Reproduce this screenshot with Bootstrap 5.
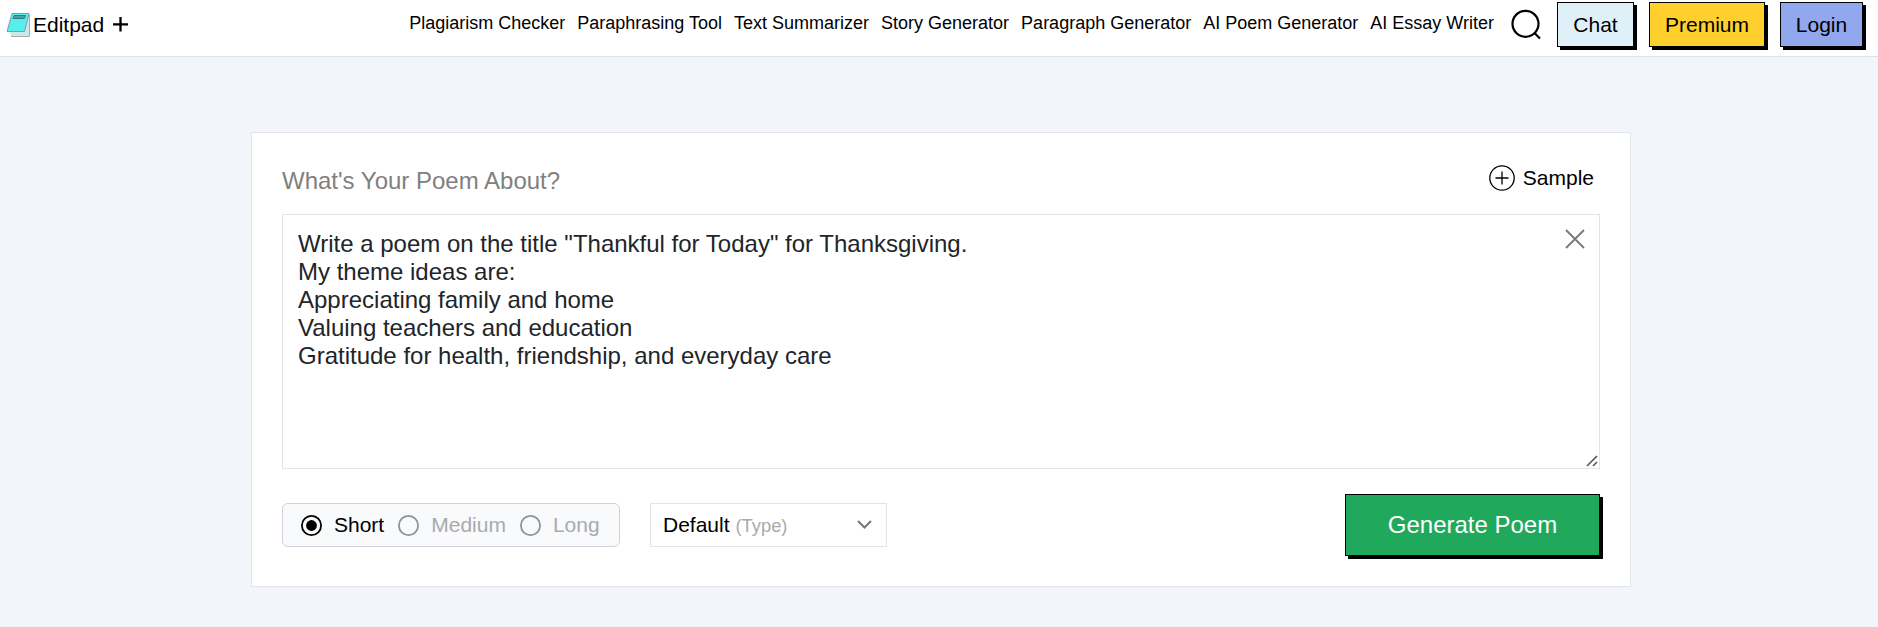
<!DOCTYPE html>
<html lang="en">
<head>
<meta charset="utf-8">
<meta name="viewport" content="width=device-width, initial-scale=1">
<title>Editpad - AI Poem Generator</title>
<link href="https://cdn.jsdelivr.net/npm/bootstrap@5.3.0/dist/css/bootstrap.min.css" rel="stylesheet">
<style>
body{font-family:"Liberation Sans",Arial,sans-serif;background:#f2f5fa;color:#000;overflow:hidden}
.topbar{height:57px;border-bottom:1px solid #dee2e6;padding:0 15px 0 6px}
.brand{font-size:21px;line-height:24px;color:#000;margin-top:13px}
.brand-name{margin-left:3px}
.plus{margin-left:9px}
.links{margin-top:12px;gap:12px;font-size:18px;line-height:22px}
.links a{color:#000;text-decoration:none;white-space:nowrap}
.search{margin:9px 0 0 17px}
.btn-block3d{border:1px solid #000;border-radius:0;box-shadow:3px 3px 0 #000;font-size:21px;line-height:24px;padding:0;color:#000;height:45px;margin-top:2px}
.b-chat{background:#e0f0f9;width:77px;margin-left:16px}
.b-prem{background:#ffcf2d;width:116px;margin-left:15px}
.b-login{background:#91a7ee;width:83px;margin-left:15px}
.tool{width:1380px;height:455px;margin:75px 0 0 251px;border:1px solid #e1e4e8;border-radius:0;padding:30px}
.tool-head{height:51px}
.ask{font-size:24px;line-height:28px;color:#808080;margin-top:4px}
.sample{font-size:21px;line-height:24px;gap:8px;margin:2px 6px 0 0}
.editor{height:255px;border:1px solid #e1e4e8;border-radius:0;padding:15px;font-size:24px;line-height:28px;color:#212529;resize:none}
.clear{top:15px;right:15px}
.grip{right:2px;bottom:2px}
.controls{margin-top:25px}
.lengths{width:338px;height:44px;background:#f9fafc;border:1px solid #ced1da;border-radius:6px;padding-left:18px;font-size:21px;color:#aaa;gap:14px}
.lengths label{gap:12px}
.kind{width:237px;height:44px;border:1px solid #e1e4e8;padding:0 14px 0 12px;margin-left:30px;font-size:21px}
.kind small{font-size:18.4px;color:#aaa}
.b-gen{width:255px;height:62px;margin:0;background:#20a95c;color:#fff;font-size:24px}
</style>
</head>
<body>
<header class="topbar bg-white d-flex align-items-start">
  <a class="brand d-flex text-decoration-none" href="#">
    <svg width="24" height="25" viewBox="0 0 24 25"><path d="M4 18 23 1V24H5z" fill="#c7e9ec"/><path d="M5 23.500H23.500V2" fill="none" stroke="#aaa"/><path d="M6 .5H23L18.500 18.500H1z" fill="#57efee" stroke="#879a9d"/><path d="M8 2.500H19.500L18.500 5.500H7z" fill="#44a3a7" stroke="#38797e"/></svg>
    <span class="brand-name">Editpad</span>
    <svg class="plus" width="15" height="24" viewBox="0 0 15 24"><path d="M0 11.300H15M7.500 4V18.500" stroke="#000" stroke-width="2.300"/></svg>
  </a>
  <nav class="links d-flex ms-auto">
    <a href="#">Plagiarism Checker</a><a href="#">Paraphrasing Tool</a><a href="#">Text Summarizer</a><a href="#">Story Generator</a><a href="#">Paragraph Generator</a><a href="#">AI Poem Generator</a><a href="#">AI Essay Writer</a>
  </nav>
  <svg class="search" width="30" height="31" viewBox="0 0 30 31" fill="none" stroke="#000" stroke-width="2.200"><circle cx="14.500" cy="14.800" r="13"/><path d="M23.500 24 29 29.500"/></svg>
  <button class="btn btn-block3d b-chat">Chat</button>
  <button class="btn btn-block3d b-prem">Premium</button>
  <button class="btn btn-block3d b-login">Login</button>
</header>
<main>
  <section class="card tool">
    <div class="tool-head d-flex justify-content-between align-items-start">
      <label class="ask" for="topic">What's Your Poem About?</label>
      <div class="sample d-flex align-items-center">
        <svg width="26" height="26" viewBox="0 0 26 26" fill="none" stroke="#000" stroke-width="1.300"><circle cx="13" cy="13" r="12.200"/><path d="M6.500 13H19.500M13 6.500V19.500"/></svg>
        <span>Sample</span>
      </div>
    </div>
    <div class="position-relative">
      <textarea id="topic" class="form-control editor" spellcheck="false">Write a poem on the title "Thankful for Today" for Thanksgiving.
My theme ideas are:
Appreciating family and home
Valuing teachers and education
Gratitude for health, friendship, and everyday care</textarea>
      <svg class="clear position-absolute" width="20" height="20" viewBox="0 0 20 20"><path d="M1 1 19 19M19 1 1 19" stroke="#777" stroke-width="1.800"/></svg>
      <svg class="grip position-absolute" width="12" height="12" viewBox="0 0 12 12"><path d="M1 11 11 1M7 11 11 7" stroke="#555" stroke-width="1.600"/></svg>
    </div>
    <div class="controls d-flex align-items-center">
      <div class="lengths d-flex align-items-center">
        <label class="d-flex align-items-center text-black"><svg width="21" height="21" viewBox="0 0 21 21"><circle cx="10.500" cy="10.500" r="9.600" fill="none" stroke="#000" stroke-width="1.800"/><circle cx="10.500" cy="10.500" r="5.400"/></svg>Short</label>
        <label class="d-flex align-items-center"><svg width="21" height="21" viewBox="0 0 21 21"><circle cx="10.500" cy="10.500" r="9.600" fill="none" stroke="#919191" stroke-width="1.800"/></svg>Medium</label>
        <label class="d-flex align-items-center"><svg width="21" height="21" viewBox="0 0 21 21"><circle cx="10.500" cy="10.500" r="9.600" fill="none" stroke="#919191" stroke-width="1.800"/></svg>Long</label>
      </div>
      <div class="kind d-flex align-items-center"><span>Default <small>(Type)</small></span>
        <svg class="ms-auto" width="15" height="10" viewBox="0 0 15 10"><path d="M1 1 7.500 7.500 14 1" fill="none" stroke="#777" stroke-width="2"/></svg>
      </div>
      <button class="btn btn-block3d b-gen ms-auto">Generate Poem</button>
    </div>
  </section>
</main>
<script src="https://cdn.jsdelivr.net/npm/bootstrap@5.3.0/dist/js/bootstrap.bundle.min.js"></script>
</body>
</html>
